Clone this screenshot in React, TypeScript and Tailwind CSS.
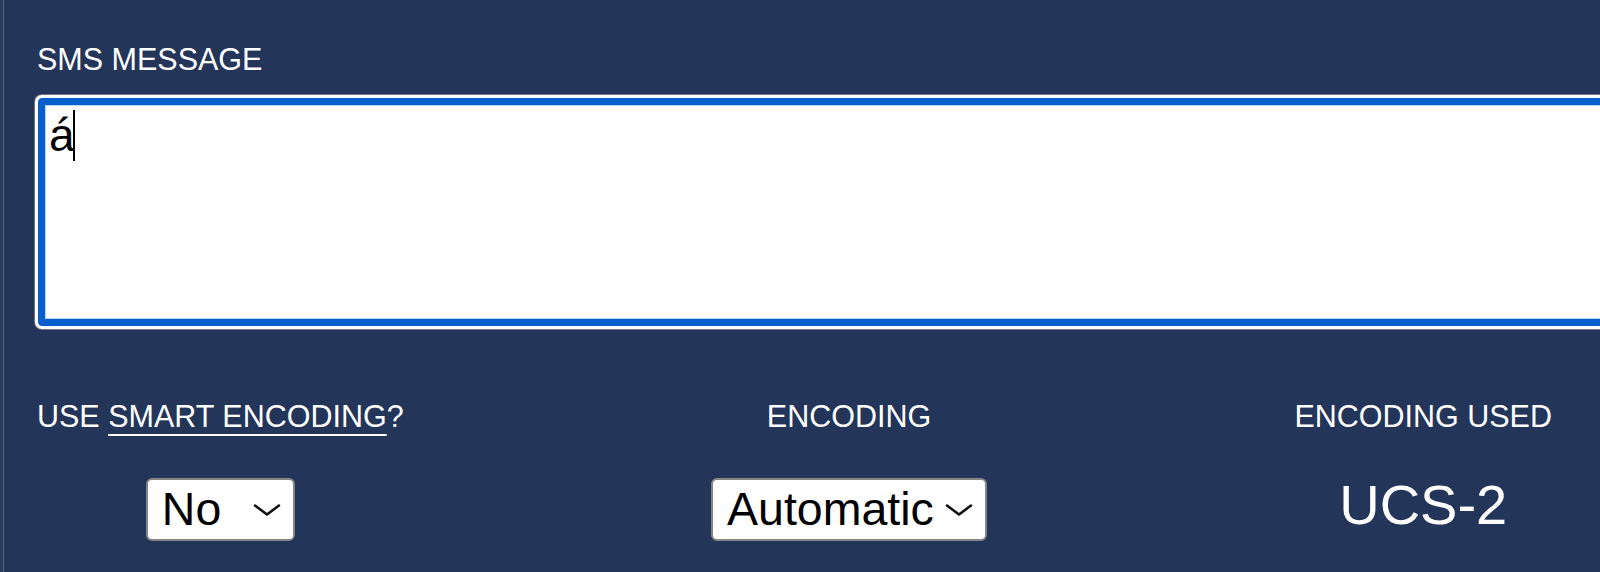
import { useState } from "react";

function Chevron() {
  return (
    <svg
      className="pointer-events-none absolute right-[14px] top-1/2 -translate-y-1/2"
      width="28"
      height="14"
      viewBox="0 0 28 14"
      fill="none"
    >
      <path d="M2 2.5 L14 11.5 L26 2.5" stroke="#111" strokeWidth="2.6" strokeLinecap="round" strokeLinejoin="round" />
    </svg>
  );
}

function Select({ value, options, width, onChange }: { value: string; options: string[]; width: string; onChange: (v: string) => void }) {
  return (
    <div className={`relative ${width}`}>
      <select
        value={value}
        onChange={(e) => onChange(e.target.value)}
        className="h-[63px] w-full appearance-none rounded-[6px] border-2 border-[#858585] bg-white pl-[14px] text-[46.5px] leading-[1.15] text-black outline-none"
      >
        {options.map((o) => (
          <option key={o} value={o}>
            {o}
          </option>
        ))}
      </select>
      <Chevron />
    </div>
  );
}

export default function App() {
  const [message, setMessage] = useState("á");
  const [smart, setSmart] = useState("No");
  const [encoding, setEncoding] = useState("Automatic");

  // anything outside GSM-7 basic set needs UCS-2
  const used = encoding === "Automatic" ? (/[^\x00-\x7F]/.test(message) ? "UCS-2" : "GSM-7") : encoding;

  return (
    <div className="flex h-[572px] w-[1600px] overflow-hidden bg-[#233559] font-['Liberation_Sans',Arial,sans-serif] text-white">
      <div className="w-[4px] shrink-0 border-r border-[#56657f] bg-[#2a3c5d]" />
      <div className="min-w-0 flex-1 pl-[33px] pt-[42px]">
        <div className="text-[30.5px] leading-[34px]">SMS MESSAGE</div>
        <div className="relative -ml-[2px] mt-[19px] w-[1600px]">
          <textarea
            value={message}
            onChange={(e) => setMessage(e.target.value)}
            className="block h-[234px] w-full resize-none rounded-[7px] border-[3px] border-white bg-white px-[11px] py-[12px] text-[46px] leading-[50px] text-black caret-transparent shadow-[inset_0_0_0_7px_#075fce,inset_0_0_0_8px_#b9d3f2,0_0_0_1px_#6c778b] outline-none"
          />
          {/* text caret after the typed character */}
          <div className="pointer-events-none absolute left-[38px] top-[15px] h-[51px] w-[2px] bg-black" />
        </div>
        <div className="mt-[70px] flex w-[1515px] justify-between text-[30.5px] leading-[34px]">
          <div className="flex flex-col items-center">
            <div>
              USE <span className="underline decoration-2 underline-offset-[7px]">SMART ENCODING</span>?
            </div>
            <div className="mt-[45px]">
              <Select value={smart} options={["No", "Yes"]} width="w-[149px]" onChange={setSmart} />
            </div>
          </div>
          <div className="flex flex-col items-center">
            <div>ENCODING</div>
            <div className="mt-[45px]">
              <Select value={encoding} options={["Automatic", "GSM-7", "UCS-2"]} width="w-[276px]" onChange={setEncoding} />
            </div>
          </div>
          <div className="flex flex-col items-center">
            <div>ENCODING USED</div>
            <div className="mt-[40px] text-[56px] leading-[64px]">{used}</div>
          </div>
        </div>
      </div>
    </div>
  );
}
